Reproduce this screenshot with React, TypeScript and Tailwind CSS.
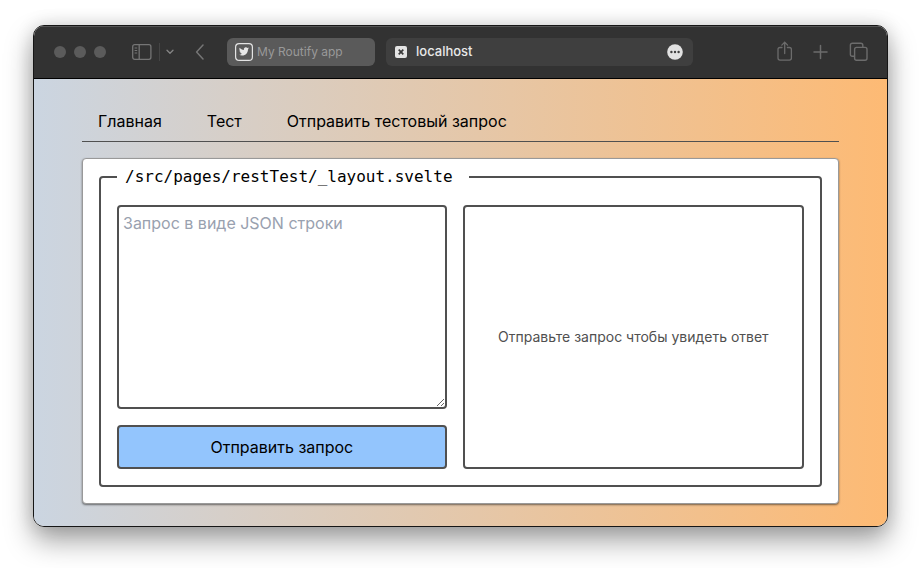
import React from "react";

function SidebarIcon() {
  return (
    <svg width="20" height="16" viewBox="0 0 20 16" fill="none" stroke="#757575" strokeWidth="1.3">
      <rect x="0.7" y="0.7" width="18.2" height="14.6" rx="2" />
      <path d="M7.2 0.7v14.6" />
      <path d="M2.6 4h2.6M2.6 6.5h2.6M2.6 9h2.6" strokeWidth="1.1" />
    </svg>
  );
}

function TwitterIcon() {
  return (
    <svg width="18" height="18" viewBox="0 0 18 18" fill="none">
      <rect x="0.6" y="0.6" width="16.8" height="16.8" rx="3.5" stroke="#e4e4e4" strokeWidth="1.2" />
      <g transform="translate(3.9 3.4) scale(0.42)">
        <path
          fill="#e8e8e8"
          d="M23.95 4.57a10 10 0 0 1-2.82.77 4.96 4.96 0 0 0 2.16-2.72c-.95.55-2 .95-3.13 1.18a4.92 4.92 0 0 0-8.38 4.48C7.69 8.1 4.07 6.13 1.64 3.16a4.92 4.92 0 0 0 1.52 6.57 4.9 4.9 0 0 1-2.23-.61v.06a4.92 4.92 0 0 0 3.95 4.83 5 5 0 0 1-2.21.08 4.94 4.94 0 0 0 4.6 3.42A9.87 9.87 0 0 1 0 19.54a14 14 0 0 0 7.55 2.21c9.05 0 14-7.5 14-13.98 0-.21 0-.42-.02-.63a9.94 9.94 0 0 0 2.42-2.57z"
        />
      </g>
    </svg>
  );
}

function Toolbar() {
  return (
    <header className="box-content flex h-13 items-center border-b border-black bg-[#323232] pr-[18px] pl-5 shadow-[inset_0_1px_0_#555555]">
      <div className="flex shrink-0 gap-2">
        <span className="size-3 rounded-full bg-[#5b5b5b]" />
        <span className="size-3 rounded-full bg-[#5b5b5b]" />
        <span className="size-3 rounded-full bg-[#5b5b5b]" />
      </div>
      <button type="button" aria-label="Sidebar" className="ml-[26px] shrink-0">
        <SidebarIcon />
      </button>
      <span className="ml-[7px] h-[18px] w-px shrink-0 bg-[#454545]" />
      <button type="button" aria-label="Tab groups" className="ml-1.5 shrink-0">
        <svg width="8" height="6" viewBox="0 0 8 6" fill="none" stroke="#858585" strokeWidth="1.3" strokeLinecap="round" strokeLinejoin="round">
          <path d="M1 1.2 4 4.3 7 1.2" />
        </svg>
      </button>
      <button type="button" aria-label="Back" className="ml-[21px] shrink-0">
        <svg width="10" height="16" viewBox="0 0 10 16" fill="none" stroke="#757575" strokeWidth="1.5" strokeLinecap="round" strokeLinejoin="round">
          <path d="M8 1 1.6 8 8 15" />
        </svg>
      </button>
      <button type="button" className="ml-[22px] flex h-7 w-[148px] shrink-0 items-center gap-1 rounded-md bg-[#5a5a5a] pl-2 text-xs text-[#999999]">
        <TwitterIcon />
        My Routify app
      </button>
      <div className="ml-[11px] flex h-7 flex-1 items-center rounded-md bg-[#3f3f3f] pr-2.5 pl-[9px]">
        <svg width="12" height="12" viewBox="0 0 12 12" className="shrink-0">
          <rect width="12" height="12" rx="2" fill="#e4e4e4" />
          <path d="m3.7 3.7 4.6 4.6m0-4.6L3.7 8.3" stroke="#3a3a3a" strokeWidth="1.7" />
        </svg>
        <input
          aria-label="Address"
          defaultValue="localhost"
          className="ml-[9px] min-w-0 flex-1 bg-transparent text-[13px] font-medium text-[#e8e8e8] outline-none"
        />
        <button type="button" aria-label="More" className="shrink-0">
          <svg width="16" height="16" viewBox="0 0 16 16">
            <circle cx="8" cy="8" r="7.8" fill="#e2e2e2" />
            <g fill="#3f3f3f">
              <circle cx="4.4" cy="8" r="1.2" />
              <circle cx="8" cy="8" r="1.2" />
              <circle cx="11.6" cy="8" r="1.2" />
            </g>
          </svg>
        </button>
      </div>
      <div className="ml-[84px] flex shrink-0 items-center gap-5">
        <button type="button" aria-label="Share">
          <svg width="16" height="22" viewBox="0 0 16 22" fill="none" stroke="#6c6c6c" strokeWidth="1.3" strokeLinecap="round" strokeLinejoin="round">
            <path d="M5 6.500H3Q1 6.500 1 8.500v8.600q0 2 2 2h9.400q2 0 2-2V8.500q0-2-2-2h-2M7.700 12.500V1.200M4.800 4.100 7.700 1.100l2.900 3" />
          </svg>
        </button>
        <button type="button" aria-label="New tab">
          <svg width="16" height="16" viewBox="0 0 16 16" fill="none" stroke="#6c6c6c" strokeWidth="1.5" strokeLinecap="round">
            <path d="M7.500 1.500v13M1 8h13" />
          </svg>
        </button>
        <button type="button" aria-label="All tabs">
          <svg width="20" height="20" viewBox="0 0 20 20" fill="none" stroke="#6c6c6c" strokeWidth="1.4" strokeLinejoin="round">
            <rect x="5.600" y="5.400" width="12.400" height="12.800" rx="2" />
            <path d="M5.600 14.200H3.400q-2 0-2-2V3.200q0-2 2-2h8.400q2 0 2 2v2.200" />
          </svg>
        </button>
      </div>
    </header>
  );
}

export default function App() {
  return (
    <div className="min-h-screen bg-white px-[33px] pt-[25px] pb-[41px] font-['Inter','Liberation_Sans',sans-serif]">
      <div className="overflow-hidden rounded-[11px] border border-[#161616] shadow-[0_14px_28px_rgba(0,0,0,0.36),0_0_18px_rgba(0,0,0,0.14)]">
        <Toolbar />
        <main className="bg-[linear-gradient(to_right,#cbd5e1,#fdba74)] px-12 py-[22px] text-black">
          <nav className="mb-4 flex gap-[45px] border-b border-[#505050] px-4 py-2">
            <a href="#home">Главная</a>
            <a href="#test">Тест</a>
            <a href="#rest">Отправить тестовый запрос</a>
          </nav>
          <section className="rounded border border-[#999999] bg-white px-4 pt-1.5 pb-4 shadow-[0_1px_2px_rgba(0,0,0,0.5)]">
            <fieldset className="rounded border-2 border-[#505050] p-4">
              <legend className="pr-4 pl-2 font-['DejaVu_Sans_Mono',monospace]">
                /src/pages/restTest/_layout.svelte
              </legend>
              <div className="flex gap-4">
                <form className="flex w-[48%] flex-col gap-4" onSubmit={(e) => e.preventDefault()}>
                  <textarea
                    aria-label="Запрос"
                    placeholder="Запрос в виде JSON строки"
                    className="h-[204px] w-full rounded border-2 border-[#505050] bg-white p-1 placeholder:text-gray-400"
                  />
                  <button type="submit" className="h-11 rounded border-2 border-[#505050] bg-[#93c5fd]">
                    Отправить запрос
                  </button>
                </form>
                <output className="flex flex-1 items-center justify-center rounded border-2 border-[#505050] text-sm text-[#505050]">
                  Отправьте запрос чтобы увидеть ответ
                </output>
              </div>
            </fieldset>
          </section>
        </main>
      </div>
    </div>
  );
}
